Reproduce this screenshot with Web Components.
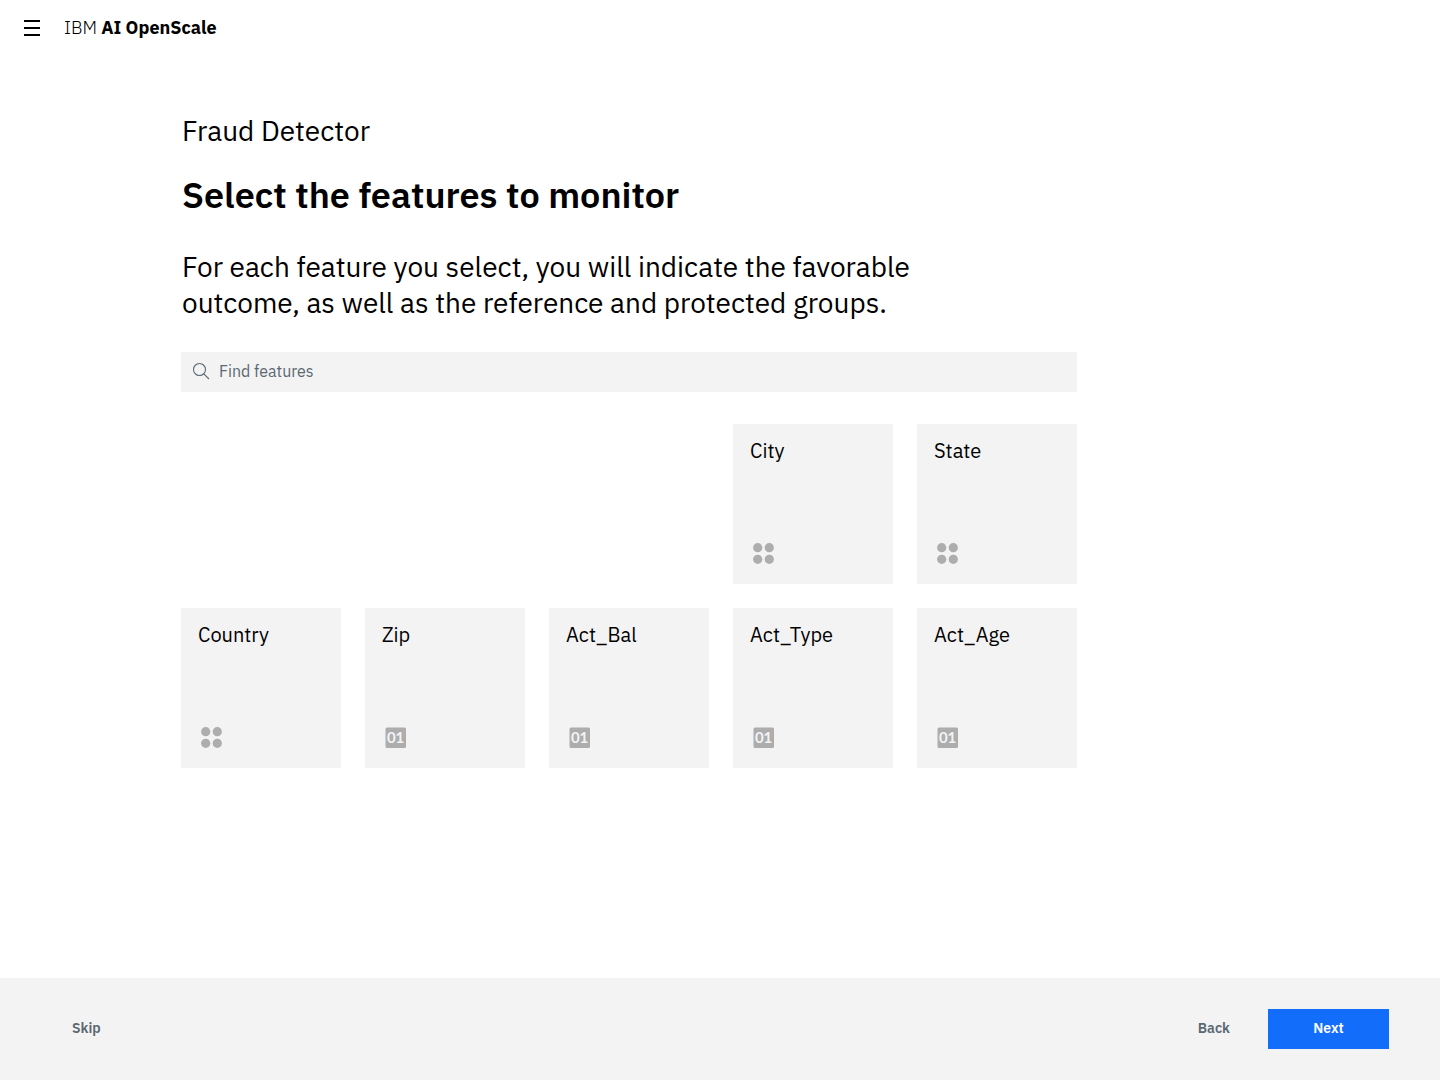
<!DOCTYPE html>
<html lang="en">
<head>
<meta charset="utf-8">
<meta name="viewport" content="width=device-width, initial-scale=1">
<title>IBM AI OpenScale</title>
<style>
  body {
    margin: 0;
    color: #000;
    background: #fff;
    font-family: "IBM Plex Sans", Roboto, sans-serif;
    --field: #f3f3f3;
    --muted: #5a6872;
    --action: #136dfb;
  }
</style>
</head>
<body>
<openscale-app></openscale-app>
<script>
class BaseElement extends HTMLElement {
  connectedCallback() {
    if (this.shadowRoot) return;
    this.attachShadow({ mode: "open" }).innerHTML = this.render();
  }
}

class AppHeader extends BaseElement {
  render() {
    return `<style>
      :host { display: block; }
      header { display: flex; align-items: center; gap: 24px; height: 56px; padding: 0 24px; }
      button { display: flex; padding: 0; border: 0; background: none; cursor: pointer; }
      a { color: inherit; text-decoration: none; font-size: 18px; line-height: 24px; font-weight: 300; }
      strong { font-weight: 700; }
    </style>
    <header>
      <button type="button" aria-label="Open menu">
        <svg width="16" height="16" viewBox="0 0 16 16" aria-hidden="true"><path d="M0 0h16v2H0zM0 7h16v2H0zM0 14h16v2H0z"/></svg>
      </button>
      <a href="#">IBM <strong>AI OpenScale</strong></a>
    </header>`;
  }
}

class FeatureSearch extends BaseElement {
  render() {
    return `<style>
      :host { display: block; }
      label { display: flex; align-items: center; gap: 10px; box-sizing: border-box; height: 40px; padding: 0 12px 2px; background: var(--field); }
      svg { flex: none; overflow: visible; }
      input { flex: 1; min-width: 0; padding: 0; border: 0; outline: 0; background: none; font: 16px/24px "IBM Plex Sans", Roboto, sans-serif; color: #000; }
      input::placeholder { color: var(--muted); opacity: 1; }
    </style>
    <label>
      <svg width="16" height="16" viewBox="0 0 16 16" fill="none" stroke="#5a6872" stroke-width="1.1" aria-hidden="true"><circle cx="6.5" cy="6.5" r="6"/><path d="M10.8 10.8 16 16"/></svg>
      <input type="search" placeholder="Find features" aria-label="Find features">
    </label>`;
  }
}

class FeatureTile extends BaseElement {
  render() {
    const icon = this.getAttribute("kind") === "number"
      ? `<rect x="0.5" y="0.5" width="20.5" height="20.5" rx="1.5" fill="#adadad"/><text x="10.6" y="16" text-anchor="middle" font-family="Lato, sans-serif" font-size="15" font-weight="700" fill="#f3f3f3">01</text>`
      : `<g fill="#adadad"><circle cx="4.7" cy="4.7" r="4.6"/><circle cx="16.3" cy="4.7" r="4.6"/><circle cx="4.7" cy="16.3" r="4.6"/><circle cx="16.3" cy="16.3" r="4.6"/></g>`;
    return `<style>
      :host { display: block; }
      button { display: flex; flex-direction: column; justify-content: space-between; align-items: flex-start; box-sizing: border-box; width: 100%; aspect-ratio: 1; padding: 15px 17px 20px; border: 0; background: var(--field); color: inherit; font: inherit; font-size: 20px; line-height: 24px; text-align: left; cursor: pointer; }
      svg { margin: 0 3px; overflow: visible; }
    </style>
    <button type="button"><slot></slot><svg width="21" height="21" viewBox="0 0 21 21" aria-hidden="true">${icon}</svg></button>`;
  }
}

class FeatureGrid extends BaseElement {
  render() {
    return `<style>
      :host { display: grid; grid-template-columns: repeat(5, minmax(0, 1fr)); gap: 24px; }
      ::slotted(:first-child) { grid-column-start: 4; }
    </style><slot></slot>`;
  }
}

class WizardFooter extends BaseElement {
  render() {
    return `<style>
      :host { display: block; }
      footer { display: flex; justify-content: space-between; align-items: center; box-sizing: border-box; height: 102px; padding: 0 51px; background: var(--field); }
      div { display: flex; gap: 17px; }
      button { height: 40px; padding: 0 21px 2px; border: 0; background: none; color: var(--muted); font: inherit; font-size: 14px; line-height: 20px; font-weight: 600; cursor: pointer; }
      .primary { min-width: 121px; background: var(--action); color: #fff; }
    </style>
    <footer>
      <button type="button">Skip</button>
      <div><button type="button">Back</button><button type="button" class="primary">Next</button></div>
    </footer>`;
  }
}

class OpenscaleApp extends BaseElement {
  render() {
    return `<style>
      :host { display: flex; flex-direction: column; min-height: 100vh; }
      main { flex: 1; box-sizing: border-box; max-width: 1077px; padding: 57px 0 32px 181px; }
      p, h1 { margin: 0; padding-left: 1px; font-size: 28px; line-height: 36px; font-weight: 400; }
      h1 { margin: 20px 0 28px; font-size: 36px; line-height: 52px; font-weight: 600; }
      .intro { max-width: 760px; }
      feature-search { margin: 31px 0 32px; }
    </style>
    <app-header></app-header>
    <main>
      <p>Fraud Detector</p>
      <h1>Select the features to monitor</h1>
      <p class="intro">For each feature you select, you will indicate the favorable outcome, as well as the reference and protected groups.</p>
      <feature-search></feature-search>
      <feature-grid>
        <feature-tile>City</feature-tile>
        <feature-tile>State</feature-tile>
        <feature-tile>Country</feature-tile>
        <feature-tile kind="number">Zip</feature-tile>
        <feature-tile kind="number">Act_Bal</feature-tile>
        <feature-tile kind="number">Act_Type</feature-tile>
        <feature-tile kind="number">Act_Age</feature-tile>
      </feature-grid>
    </main>
    <wizard-footer></wizard-footer>`;
  }
}

customElements.define("app-header", AppHeader);
customElements.define("feature-search", FeatureSearch);
customElements.define("feature-tile", FeatureTile);
customElements.define("feature-grid", FeatureGrid);
customElements.define("wizard-footer", WizardFooter);
customElements.define("openscale-app", OpenscaleApp);
</script>
</body>
</html>
